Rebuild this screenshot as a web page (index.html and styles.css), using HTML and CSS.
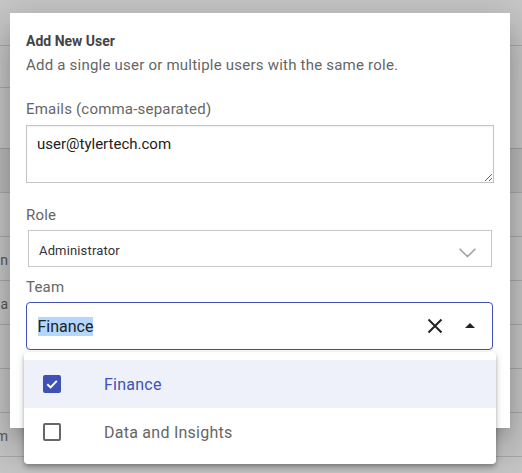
FILE: index.html
```html
<!DOCTYPE html>
<html lang="en">
<head>
<meta charset="utf-8">
<title>Add New User</title>
<link rel="stylesheet" href="styles.css">
</head>
<body>
  <!-- dimmed user table behind the modal -->
  <div class="page">
    <div class="row row-head"></div>
    <div class="row row-tall"><div class="stub-line"></div></div>
    <div class="row row-dark"></div>
    <div class="row"></div>
    <div class="row"><span class="cell">n</span></div>
    <div class="row"><span class="cell">ta</span></div>
    <div class="row"></div>
    <div class="row"></div>
    <div class="row"><span class="cell">m</span></div>
  </div>

  <div class="dialog">
    <h2 class="title">Add New User</h2>
    <p class="subtitle">Add a single user or multiple users with the same role.</p>

    <label class="label label-emails" for="emails">Emails (comma-separated)</label>
    <textarea id="emails" class="emails">user@tylertech.com</textarea>

    <div class="label label-role">Role</div>
    <div class="select">
      <span>Administrator</span>
      <svg class="chevron" width="17" height="10" viewBox="0 0 17 10"><path d="M0.6 0.8 L8.5 8.6 L16.4 0.8" fill="none" stroke="#9a9a9a" stroke-width="1.4"/></svg>
    </div>

    <div class="label label-team">Team</div>
    <div class="combo">
      <span class="combo-value"><span class="sel">Finance</span></span>
      <svg class="clear" width="16" height="16" viewBox="0 0 16 16"><path d="M1.5 1.5 L14.5 14.5 M14.5 1.5 L1.5 14.5" stroke="#222" stroke-width="2"/></svg>
      <svg class="caret" width="10" height="5" viewBox="0 0 10 5"><path d="M0 5 L5 0 L10 5 Z" fill="#222"/></svg>
    </div>
  </div>

  <ul class="menu">
    <li class="option option-active">
      <span class="box box-checked"><svg width="14" height="14" viewBox="0 0 14 14"><path d="M2.3 7.2 L5.6 10.4 L11.8 3.9" fill="none" stroke="#fff" stroke-width="2"/></svg></span>
      <span class="option-text">Finance</span>
    </li>
    <li class="option">
      <span class="box"></span>
      <span class="option-text">Data and Insights</span>
    </li>
  </ul>
</body>
</html>
```

FILE: styles.css
```css
* { box-sizing: border-box; }

html, body {
  margin: 0;
  height: 100%;
}

body {
  background: #c8c8c8;
  font-family: Roboto, "Liberation Sans", sans-serif;
  overflow: hidden;
  position: relative;
}

/* background table */
.page {
  display: flex;
  flex-direction: column;
}

.row {
  height: 44px;
  border-bottom: 1px solid #ababab;
  display: flex;
  align-items: center;
}

.row-head { height: 46px; }

.row-tall {
  height: 103px;
  border-bottom-color: #a5a5a5;
  align-items: flex-start;
}

.stub-line {
  width: 12px;
  height: 42px;
  border-bottom: 1px solid #ababab;
}

.row-dark {
  height: 44px;
  background: #bdbdbd;
}

.cell {
  width: 8px;
  display: flex;
  justify-content: flex-end;
  font-size: 14px;
  line-height: 16px;
  color: #585858;
  white-space: nowrap;
  padding-top: 2px;
}

/* modal dialog */
.dialog {
  position: absolute;
  left: 10px;
  top: 13px;
  width: 500px;
  height: 415px;
  background: #fff;
  padding: 18px 16px 0 16px;
  box-shadow: 0 11px 15px -7px rgba(0,0,0,0.2), 0 24px 38px 3px rgba(0,0,0,0.14), 0 9px 46px 8px rgba(0,0,0,0.12);
}

.title {
  margin: 0;
  font-size: 14px;
  line-height: 20px;
  font-weight: 700;
  color: #444;
}

.subtitle {
  margin: 4px 0 0;
  font-size: 15px;
  line-height: 20px;
  letter-spacing: 0.22px;
  color: #666;
}

.label {
  display: block;
  font-size: 15px;
  line-height: 20px;
  letter-spacing: 0.2px;
  color: #666;
}

.label-emails { margin-top: 24px; }

.emails {
  display: block;
  margin-top: 6px;
  width: 468px;
  height: 58px;
  border: 1px solid #c4c4c4;
  padding: 8px 10px;
  font-family: Roboto, "Liberation Sans", sans-serif;
  font-size: 15px;
  line-height: 20px;
  color: #222;
  outline: none;
  box-shadow: inset 0 1px 2px rgba(0,0,0,0.06);
}

.label-role { margin-top: 22px; }

.select {
  margin: 5px 2px 0;
  width: 464px;
  height: 37px;
  border: 1px solid #c8c8c8;
  display: flex;
  align-items: flex-start;
  justify-content: space-between;
  padding: 12px 15px 0 10px;
  font-size: 13px;
  line-height: 16px;
  letter-spacing: 0.15px;
  color: #333;
}

.chevron { margin-top: 5px; }

.label-team { margin-top: 10px; }

.combo {
  margin-top: 5px;
  width: 467px;
  height: 48px;
  border: 1.5px solid #3f51b5;
  border-radius: 4px;
  display: flex;
  align-items: center;
  padding: 0 17px 0 10.5px;
}

.combo-value {
  flex: 1;
  font-size: 16px;
  line-height: 19px;
  color: #222;
}

.sel { background: #b3d7fe; }

.clear { margin-right: 22px; }

.caret { margin-top: -2px; }

/* option list */
.menu {
  position: absolute;
  left: 24px;
  top: 352px;
  width: 472px;
  margin: 0;
  padding: 8px 0;
  list-style: none;
  background: #fff;
  border-radius: 4px;
  box-shadow: 0 2px 4px -1px rgba(0,0,0,0.2), 0 4px 5px 0 rgba(0,0,0,0.14), 0 1px 10px 0 rgba(0,0,0,0.12);
}

.option {
  height: 48px;
  display: flex;
  align-items: center;
  padding-left: 19px;
  font-size: 16px;
  letter-spacing: 0.25px;
  color: #666;
}

.option-active {
  background: #eef1f9;
  color: #3f51b5;
}

.box {
  width: 18px;
  height: 18px;
  border: 2px solid #666;
  border-radius: 2px;
  display: flex;
  align-items: center;
  justify-content: center;
  flex-shrink: 0;
}

.box-checked {
  background: #3f51b5;
  border-color: #3f51b5;
}

.option-text { margin-left: 43px; }
```
